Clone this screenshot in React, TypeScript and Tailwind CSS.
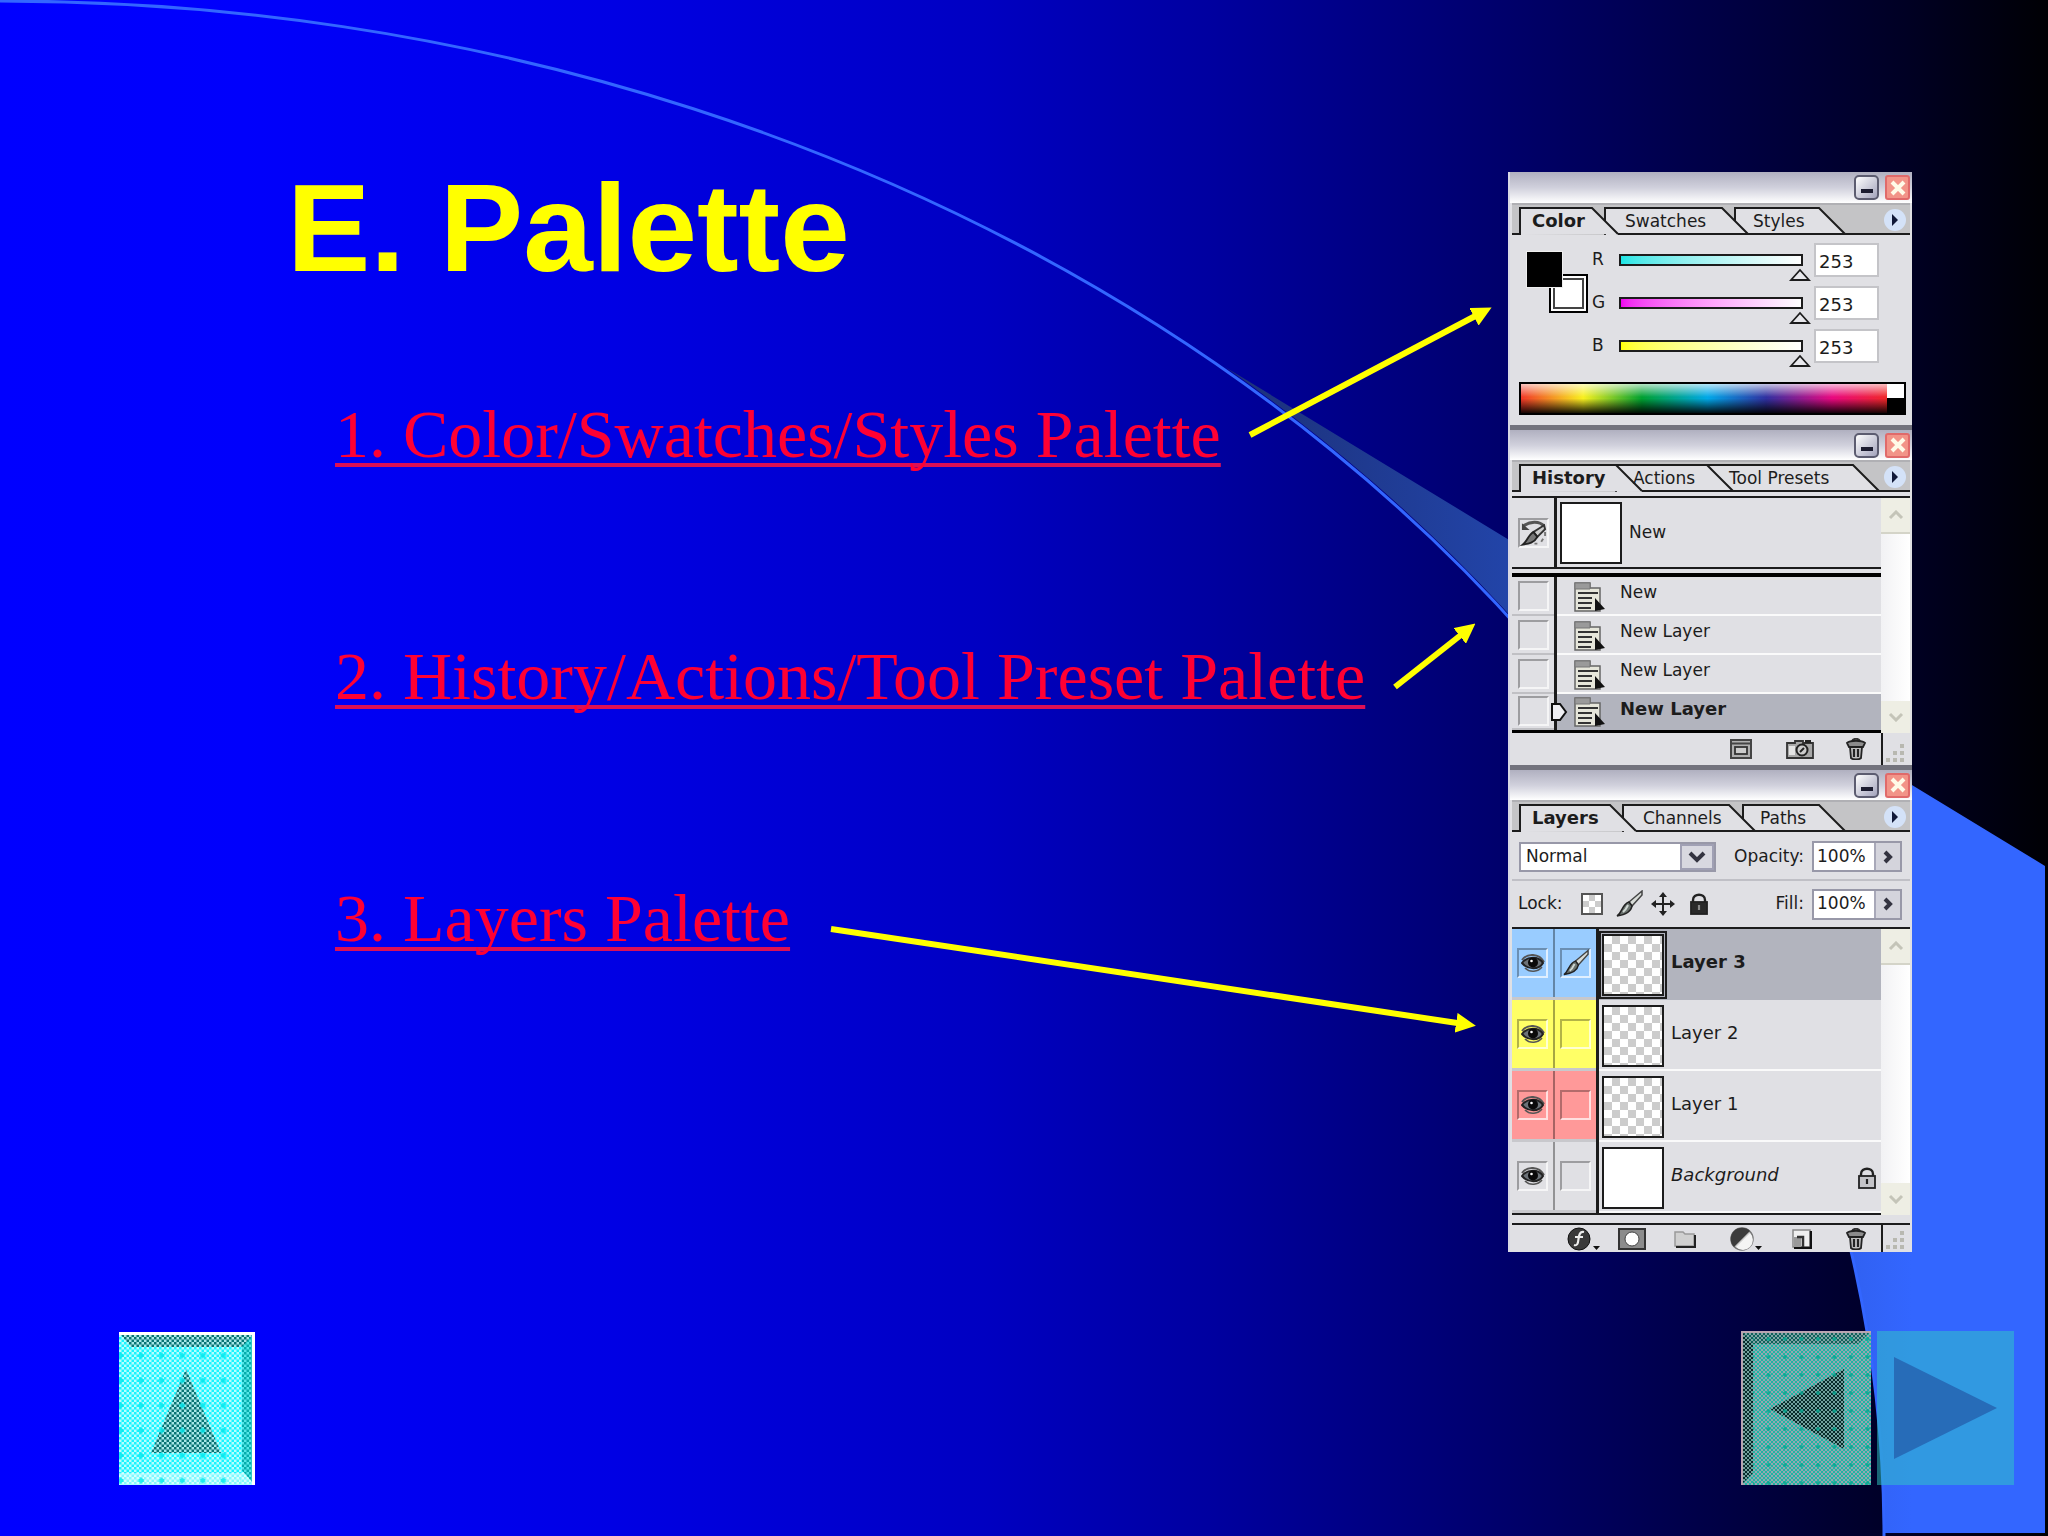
import React from "react";

type Tab = { label: string; start: number; end: number; width: string };

const links = [
  { href: "#color", text: "1. Color/Swatches/Styles Palette" },
  { href: "#history", text: "2. History/Actions/Tool Preset Palette" },
  { href: "#layers", text: "3. Layers Palette" },
];

const colorTabs: Tab[] = [
  { label: "Color", start: 8, end: 80, width: "w-[93px]" },
  { label: "Swatches", start: 93, end: 210, width: "w-[128px]" },
  { label: "Styles", start: 223, end: 307, width: "w-[80px]" },
];

const historyTabs: Tab[] = [
  { label: "History", start: 8, end: 104, width: "w-[101px]" },
  { label: "Actions", start: 104, end: 195, width: "w-[96px]" },
  { label: "Tool Presets", start: 195, end: 341, width: "w-[120px]" },
];

const layerTabs: Tab[] = [
  { label: "Layers", start: 8, end: 98, width: "w-[111px]" },
  { label: "Channels", start: 111, end: 217, width: "w-[117px]" },
  { label: "Paths", start: 231, end: 307, width: "w-[80px]" },
];

const channels = [
  { name: "R", track: "bg-linear-to-r from-[#19e6e6] to-white" },
  { name: "G", track: "bg-linear-to-r from-[#f000f0] to-white" },
  { name: "B", track: "bg-linear-to-r from-[#ffff00] to-white" },
];

const historyStates = [
  { label: "New", selected: false },
  { label: "New Layer", selected: false },
  { label: "New Layer", selected: false },
  { label: "New Layer", selected: true },
];

const layers = [
  { label: "Layer 3", tint: "bg-[#99ccff]", selected: true },
  { label: "Layer 2", tint: "bg-[#ffff66]", selected: false },
  { label: "Layer 1", tint: "bg-[#ff9999]", selected: false },
  { label: "Background", tint: "bg-[#e0e0e4]", selected: false },
];

/* Icons */

function BrushIcon() {
  return (
    <svg viewBox="0 0 28 28" className="h-7 w-7">
      <path d="M27 1 L14 12 L17 16 L27 5Z" fill="#d8dcd8" stroke="#444" strokeWidth="1.500" />
      <path d="M14 12 L17 16 C16 22 9 25 2 26 C7 23 7 14 14 12Z" fill="#6c7470" stroke="#222" strokeWidth="1.500" />
      <path d="M8 22 C11 20 12 17 13 15" stroke="#d0d8d4" strokeWidth="2" fill="none" />
    </svg>
  );
}

function EyeIcon() {
  return (
    <svg viewBox="0 0 24 20" className="h-5 w-6">
      <path d="M1 7 C6 0 18 0 23 9" fill="none" stroke="#555" strokeWidth="2" />
      <path d="M1 10 C6 3 18 3 22 10 C18 17 7 17 1 10Z" fill="#6c7278" stroke="#222" strokeWidth="2" />
      <circle cx="12" cy="9.500" r="5" fill="#0a0a0a" />
      <circle cx="10.500" cy="8" r="1.300" fill="#fff" />
      <path d="M4 15 C9 20 17 19 21 14" fill="none" stroke="#555" strokeWidth="1.600" />
    </svg>
  );
}

function StateIcon() {
  return (
    <svg viewBox="0 0 32 30" className="h-[30px] w-8">
      <path d="M1 29 V1 H16 V6 H26 V29Z" fill="#e6e6da" stroke="#666" strokeWidth="1.500" />
      <path d="M1 1 H16 V7 H1Z" fill="#9a9a9a" stroke="#777" />
      <path d="M4 11 H24 M4 16 H18 M4 21 H18 M4 26 H17" stroke="#333" strokeWidth="1.800" />
      <path d="M21 16 L31 27 L21 29Z" fill="#111" />
    </svg>
  );
}

function HistoryBrushIcon() {
  return (
    <svg viewBox="0 0 28 28" className="h-7 w-7">
      <path d="M3 7 C10 2 20 1 25 7" fill="none" stroke="#555" strokeWidth="3" />
      <path d="M2 4 V11 H10Z" fill="#444" />
      <path d="M25 6 L14 13 L18 18 L26 10Z" fill="#ccc" stroke="#333" strokeWidth="2" />
      <path d="M14 13 L18 18 C15 24 9 25 3 26 C8 22 9 15 14 13Z" fill="#777" stroke="#222" strokeWidth="2" />
      <path d="M26 13 V17 M24 20 L22 23 M18 25 H15" stroke="#777" strokeWidth="2" />
    </svg>
  );
}

function TrashIcon() {
  return (
    <svg viewBox="0 0 22 22" className="h-[22px] w-[22px]">
      <path d="M7 3 C8 0 14 0 15 3" fill="none" stroke="#333" strokeWidth="1.800" />
      <path d="M2 5 C5 2 17 2 20 5 L18 9 H4Z" fill="#8c8c8c" stroke="#222" strokeWidth="1.800" />
      <path d="M5 9 H17 L16 20 C14 22 8 22 6 20Z" fill="#c0c0c0" stroke="#222" strokeWidth="1.800" />
      <path d="M9 11 V19 M13 11 V19" stroke="#222" strokeWidth="2.200" />
    </svg>
  );
}

function NewDocumentIcon() {
  return (
    <svg viewBox="0 0 22 20" className="h-5 w-[22px]">
      <rect x="1" y="1" width="20" height="18" fill="#b0b0b0" stroke="#444" strokeWidth="2" />
      <path d="M2 4.500 H20" stroke="#444" strokeWidth="2" />
      <rect x="5" y="8" width="12" height="7" fill="#ccc" stroke="#333" strokeWidth="1.800" />
    </svg>
  );
}

function CameraIcon() {
  return (
    <svg viewBox="0 0 28 20" className="h-5 w-7">
      <path d="M1 4 H9 V2 H17 V4 H27 V19 H1Z" fill="#a8a8a8" stroke="#333" strokeWidth="1.800" />
      <rect x="3" y="7" width="6" height="9" fill="#e4e4e4" />
      <circle cx="16" cy="11" r="5.500" fill="#ccc" stroke="#222" strokeWidth="2" />
      <path d="M14 13 L18 9" stroke="#222" strokeWidth="2" />
      <path d="M19 1 H25 V4 H19Z" fill="#222" />
    </svg>
  );
}

function LockIcon({ solid }: { solid?: boolean }) {
  return (
    <svg viewBox="0 0 20 22" className="h-[22px] w-5">
      <path d="M4 10 V7 C4 0 16 0 16 7 V10" fill="none" stroke="#222" strokeWidth="2.400" />
      <rect x="2" y="9" width="16" height="12" fill={solid ? "#2a2a2a" : "#c4c4c8"} stroke="#222" strokeWidth="1.800" />
      <path d="M10 12 V17" stroke={solid ? "#888" : "#222"} strokeWidth="2.200" />
    </svg>
  );
}

function GripIcon() {
  return (
    <svg viewBox="0 0 24 24" className="h-6 w-6">
      <g fill="#b8b8b0">
        <rect x="17" y="3" width="4" height="4" />
        <rect x="10" y="10" width="4" height="4" />
        <rect x="17" y="10" width="4" height="4" />
        <rect x="3" y="17" width="4" height="4" />
        <rect x="10" y="17" width="4" height="4" />
        <rect x="17" y="17" width="4" height="4" />
      </g>
    </svg>
  );
}

/* Palette window parts */

function TitleBar({ first }: { first?: boolean }) {
  return (
    <div
      className={
        first
          ? "flex h-[31px] items-center justify-end gap-[6px] bg-linear-to-b from-[#b0b0c0] via-[#d0d0dc] to-white pr-[2px]"
          : "flex h-[35px] items-center justify-end gap-[6px] border-t-[5px] border-[#73737d] bg-linear-to-b from-[#b0b0c0] via-[#d0d0dc] to-white pr-[2px]"
      }
    >
      <button
        type="button"
        aria-label="Minimize"
        className="flex h-[25px] w-[25px] items-end justify-center rounded-[5px] border-2 border-[#5c5c70] bg-linear-to-br from-white to-[#a4a4bc] pb-[5px]"
      >
        <span className="h-1 w-3 bg-[#1c1c30]" />
      </button>
      <button
        type="button"
        aria-label="Close"
        className="flex h-[25px] w-[25px] items-center justify-center rounded-[3px] border-2 border-[#e06a6a] bg-[#f29488]"
      >
        <svg viewBox="0 0 16 16" className="h-4 w-4">
          <path d="M2 2 L14 14 M14 2 L2 14" stroke="#fffbe8" strokeWidth="4" />
        </svg>
      </button>
    </div>
  );
}

function TabStrip({ tabs }: { tabs: Tab[] }) {
  return (
    <div className="relative mx-[2px] flex h-8 items-center border-t-2 border-[#b0b0b4] bg-[#c4c4c6] pl-5">
      <svg viewBox="0 0 398 32" className="absolute -top-[2px] left-0 h-8 w-full" preserveAspectRatio="none">
        {[...tabs].reverse().map((tab) => (
          <path
            key={tab.label}
            d={`M${tab.start} 32 V5 H${tab.end} l26 26`}
            fill="#e0e0e4"
            stroke="#1c1c1c"
            strokeWidth="2"
          />
        ))}
        <path d={`M0 31 H8 M${tabs[0].end + 26} 31 H398`} stroke="#1c1c1c" strokeWidth="2" />
      </svg>
      {tabs.map((tab, index) => (
        <button
          key={tab.label}
          type="button"
          className={`relative h-7 shrink-0 pt-[2px] text-left whitespace-nowrap ${tab.width} ${
            index === 0 ? "text-[18px] leading-[26px] font-bold" : "text-[17px] leading-[26px]"
          }`}
        >
          {tab.label}
        </button>
      ))}
      <button
        type="button"
        aria-label="Palette menu"
        className="absolute top-1 right-1 flex h-[22px] w-[22px] items-center justify-center rounded-full bg-[#d4e2f8]"
      >
        <svg viewBox="0 0 8 12" className="h-3 w-2">
          <path d="M1 0 L7 6 L1 12Z" fill="#101838" />
        </svg>
      </button>
    </div>
  );
}

function ScrollBar() {
  return (
    <div className="flex w-[29px] shrink-0 flex-col justify-between bg-linear-to-r from-[#f2f2f4] to-white">
      <button type="button" aria-label="Scroll up" className="flex h-9 items-center justify-center border-b-2 border-[#d4d4c8] bg-[#eeeee4]">
        <svg viewBox="0 0 16 10" className="h-[10px] w-4">
          <path d="M2 8 L8 2 L14 8" fill="none" stroke="#c4c4b8" strokeWidth="3" />
        </svg>
      </button>
      <button type="button" aria-label="Scroll down" className="flex h-8 items-center justify-center bg-[#eeeee4]">
        <svg viewBox="0 0 16 10" className="h-[10px] w-4">
          <path d="M2 2 L8 8 L14 2" fill="none" stroke="#c4c4b8" strokeWidth="3" />
        </svg>
      </button>
    </div>
  );
}

function InsetBox({ children }: { children?: React.ReactNode }) {
  return (
    <span className="flex h-[30px] w-[31px] items-center justify-center border-2 border-t-black/30 border-r-white/70 border-b-white/70 border-l-black/30">
      {children}
    </span>
  );
}

function ColorPalette() {
  return (
    <section id="color" aria-label="Color palette">
      <TitleBar first />
      <TabStrip tabs={colorTabs} />
      <div className="flex h-[137px] pt-2 pl-4">
        <div className="relative mt-2 h-[62px] w-[62px] shrink-0">
          <button
            type="button"
            aria-label="Background color"
            className="absolute right-0 bottom-0 h-[39px] w-[39px] border-2 border-black bg-white outline-2 -outline-offset-[6px] outline-[#444]"
          />
          <button type="button" aria-label="Foreground color" className="absolute top-0 left-0 h-[37px] w-[37px] border border-[#eee] bg-black" />
        </div>
        <div className="flex flex-col gap-[9px] pl-1">
          {channels.map((channel) => (
            <div key={channel.name} className="flex h-[34px] items-center">
              <label htmlFor={`channel-${channel.name}`} className="w-[27px] text-[17px]">
                {channel.name}
              </label>
              <div className="relative flex h-3 w-[184px]">
                <input
                  id={`channel-${channel.name}`}
                  type="range"
                  min={0}
                  max={255}
                  defaultValue={253}
                  className={`h-3 w-full appearance-none border-2 border-[#1c1c1c] [&::-webkit-slider-thumb]:opacity-0 ${channel.track}`}
                />
                <svg viewBox="0 0 22 13" className="absolute top-[14px] -right-2 h-[13px] w-[22px]">
                  <path d="M2 12 L11 2 L20 12Z" fill="#e8e8ec" stroke="#1c1c1c" strokeWidth="1.800" />
                </svg>
              </div>
              <input
                type="text"
                aria-label={`${channel.name} value`}
                defaultValue="253"
                className="ml-[11px] h-[34px] w-[65px] border-2 border-[#c4c4c8] bg-white pt-[2px] pl-[3px] text-[18px]"
              />
            </div>
          ))}
        </div>
      </div>
      <div className="pt-[10px] pr-[6px] pb-[10px] pl-[9px]">
        <div className="flex h-[33px] border-2 border-black">
          <div className="flex-1 bg-[image:linear-gradient(to_bottom,rgba(255,255,255,0.7),transparent_45%,transparent_50%,rgba(0,0,0,0.9)),linear-gradient(to_right,#f03828,#f8f020_17%,#00a030_33%,#00a8e8_51%,#3030a0_67%,#e80880_85%,#f02828)]" />
          <div className="w-[17px] bg-linear-to-b from-white from-50% to-black to-50%" />
        </div>
      </div>
    </section>
  );
}

function HistoryPalette() {
  return (
    <section id="history" aria-label="History palette">
      <TitleBar />
      <TabStrip tabs={historyTabs} />
      <div className="mx-[2px] mt-1 flex border-t-2 border-[#1c1c1c]">
        <div className="flex-1">
          <div className="flex h-[71px] border-b-2 border-[#1c1c1c]">
            <div className="flex w-[42px] items-center justify-center">
              <InsetBox>
                <HistoryBrushIcon />
              </InsetBox>
            </div>
            <div className="flex flex-1 items-center gap-[7px] border-l-3 border-[#1c1c1c] pl-[3px]">
              <span className="h-[62px] w-[62px] border-2 border-[#1c1c1c] bg-white" />
              <span className="text-[17px]">New</span>
            </div>
          </div>
          <ul className="mt-1 border-t-4 border-b-3 border-black">
            {historyStates.map((state, index) => (
              <li key={index} className={state.selected ? "flex h-9" : "flex h-[39px]"}>
                <div className="flex w-[42px] items-center justify-center border-b-2 border-[#c0c0c4]">
                  <InsetBox />
                </div>
                <div
                  className={`relative flex flex-1 items-center gap-[14px] border-l-3 border-[#1c1c1c] pl-[17px] ${
                    state.selected ? "bg-[#b2b4be]" : "shadow-[inset_0_-2px_0_#fafafa]"
                  }`}
                >
                  {state.selected && (
                    <svg viewBox="0 0 18 20" className="absolute top-2 -left-[7px] h-5 w-[18px]">
                      <path d="M2 2 H10 L16 10 L10 18 H2Z" fill="#f0f0f4" stroke="#111" strokeWidth="2" />
                    </svg>
                  )}
                  <StateIcon />
                  <span className={state.selected ? "pb-[7px] text-[18px] font-bold" : "pb-[7px] text-[17px]"}>
                    {state.label}
                  </span>
                </div>
              </li>
            ))}
          </ul>
        </div>
        <ScrollBar />
      </div>
      <div className="mx-[2px] flex h-8 items-center justify-end">
        <button type="button" aria-label="New document from state" className="mr-[34px]">
          <NewDocumentIcon />
        </button>
        <button type="button" aria-label="New snapshot" className="mr-[31px]">
          <CameraIcon />
        </button>
        <button type="button" aria-label="Delete state" className="mr-[14px]">
          <TrashIcon />
        </button>
        <span className="flex h-full w-[29px] items-end border-l-2 border-[#1c1c1c]">
          <GripIcon />
        </span>
      </div>
    </section>
  );
}

function PercentField({ label }: { label: string }) {
  return (
    <label className="ml-auto flex items-center gap-2 text-[17px]">
      {label}
      <span className="flex h-[31px] w-[90px] border-2 border-[#9898a8] bg-white">
        <input type="text" defaultValue="100%" className="w-[60px] pl-[3px] text-[17px]" />
        <span className="flex flex-1 items-center justify-center border-l-2 border-[#a8a8b8] bg-[#d4d4dc]">
          <svg viewBox="0 0 10 14" className="h-[14px] w-[10px]">
            <path d="M2 2 L7 7 L2 12" fill="none" stroke="#333340" strokeWidth="4" />
          </svg>
        </span>
      </span>
    </label>
  );
}

function LayersPalette() {
  return (
    <section id="layers" aria-label="Layers palette">
      <TitleBar />
      <TabStrip tabs={layerTabs} />
      <div className="mx-[2px] flex h-[49px] items-center border-b-2 border-[#c0c0c6] pt-[2px] pr-[8px] pl-[7px]">
        <div className="relative w-[197px]">
          <select
            aria-label="Blending mode"
            className="h-[30px] w-full appearance-none border-2 border-[#9898a8] bg-white pl-[5px] text-[17px]"
          >
            <option>Normal</option>
          </select>
          <span className="pointer-events-none absolute top-[2px] right-[2px] flex h-[26px] w-[34px] items-center justify-center border-2 border-[#a0a0b4] bg-[#d8d8e0]">
            <svg viewBox="0 0 18 12" className="h-3 w-[18px]">
              <path d="M2 2 L9 9 L16 2" fill="none" stroke="#333340" strokeWidth="4" />
            </svg>
          </span>
        </div>
        <PercentField label="Opacity:" />
      </div>
      <div className="mx-[2px] flex h-12 items-center border-b-2 border-[#1c1c1c] pr-[8px] pl-[6px]">
        <span className="w-[63px] text-[17px]">Lock:</span>
        <button
          type="button"
          aria-label="Lock transparent pixels"
          className="mr-3 h-[22px] w-[22px] border-2 border-[#555] bg-[image:repeating-conic-gradient(#ccc_0_25%,#fff_0_50%)] bg-[length:12px_12px]"
        />
        <button type="button" aria-label="Lock image pixels" className="mr-2">
          <BrushIcon />
        </button>
        <button type="button" aria-label="Lock position" className="mr-[14px]">
          <svg viewBox="0 0 24 24" className="h-6 w-6">
            <path d="M12 3 V21 M3 12 H21" stroke="#222" strokeWidth="2" />
            <path d="M12 0 L16 5 H8Z M12 24 L16 19 H8Z M0 12 L5 8 V16Z M24 12 L19 8 V16Z" fill="#222" />
          </svg>
        </button>
        <button type="button" aria-label="Lock all">
          <LockIcon solid />
        </button>
        <PercentField label="Fill:" />
      </div>
      <div className="mx-[2px] flex">
        <ul className="flex-1 border-b-2 border-[#1c1c1c]">
          {layers.map((layer) => (
            <li key={layer.label} className="flex h-[71px]">
              <div className={`flex w-[84px] border-b-3 border-[#c8c8cc] ${layer.tint}`}>
                <button
                  type="button"
                  aria-label={`Toggle ${layer.label}`}
                  className="flex w-[43px] items-center justify-center border-r-2 border-black/35"
                >
                  <InsetBox>
                    <EyeIcon />
                  </InsetBox>
                </button>
                <span className="flex flex-1 items-center justify-center">
                  <InsetBox>{layer.selected && <BrushIcon />}</InsetBox>
                </span>
              </div>
              <div
                className={`flex flex-1 items-center border-l-3 border-[#1c1c1c] pr-1 pl-[3px] ${
                  layer.selected ? "bg-[#b2b4be]" : "shadow-[inset_0_-2px_0_#fafafa]"
                }`}
              >
                {/* the active layer gets a second frame round its thumbnail */}
                <span
                  className={`block h-[62px] w-[62px] border-2 border-[#1c1c1c] ${
                    layer.selected ? "outline-2 outline-offset-1 outline-[#1c1c1c]" : ""
                  } ${
                    layer.label === "Background"
                      ? "bg-white"
                      : "bg-[image:repeating-conic-gradient(#ccc_0_25%,#fff_0_50%)] bg-[length:16px_16px]"
                  }`}
                />
                <span
                  className={`ml-[7px] flex-1 pb-[6px] text-[18px] ${layer.selected ? "font-bold" : ""} ${
                    layer.label === "Background" ? "italic" : ""
                  }`}
                >
                  {layer.label}
                </span>
                {layer.label === "Background" && <LockIcon />}
              </div>
            </li>
          ))}
        </ul>
        <ScrollBar />
      </div>
      <div className="mx-[2px] mt-2 flex h-[29px] items-center justify-end border-t-2 border-[#1c1c1c]">
        <button type="button" aria-label="Layer style" className="mr-[17px]">
          <svg viewBox="0 0 34 24" className="h-6 w-[34px]">
            <circle cx="12" cy="12" r="11" fill="#3a3a3a" stroke="#111" />
            <path d="M17 5 C13 4 12 8 11.500 12 C11 17 10 19 7 18 M8 10 H16" fill="none" stroke="#eee" strokeWidth="2.200" />
            <path d="M26 19 H33 L29.500 23Z" fill="#111" />
          </svg>
        </button>
        <button type="button" aria-label="Add mask" className="mr-[28px]">
          <svg viewBox="0 0 28 22" className="h-[22px] w-7">
            <rect x="1" y="1" width="26" height="20" fill="#8c8c8c" stroke="#333" strokeWidth="2" />
            <circle cx="14" cy="11" r="7" fill="#fff" stroke="#444" />
          </svg>
        </button>
        <button type="button" aria-label="New set" className="mr-[34px]">
          <svg viewBox="0 0 22 18" className="h-[18px] w-[22px]">
            <path d="M1 2 H9 L11 4 H20 V16 H1Z" fill="#d0d0d0" stroke="#999" strokeWidth="1.500" />
            <path d="M2 17 H21 V5" fill="none" stroke="#222" strokeWidth="2" />
          </svg>
        </button>
        <button type="button" aria-label="New adjustment layer" className="mr-[30px]">
          <svg viewBox="0 0 32 24" className="h-6 w-8">
            <circle cx="12" cy="12" r="11" fill="#c8c8c8" stroke="#777" strokeWidth="1.500" />
            <path d="M4 20 A11 11 0 0 1 20 4Z" fill="#3c3c3c" />
            <path d="M6 20 L20 6 A9 9 0 0 1 6 20Z" fill="#f4f4f4" />
            <path d="M25 19 H32 L28.500 23Z" fill="#111" />
          </svg>
        </button>
        <button type="button" aria-label="New layer" className="mr-[33px]">
          <svg viewBox="0 0 20 20" className="h-5 w-5">
            <rect x="1" y="1" width="17" height="17" fill="#f0f0f0" stroke="#888" strokeWidth="1.500" />
            <path d="M2 19 H19 V2" fill="none" stroke="#111" strokeWidth="2.500" />
            <path d="M2 8 H9 V18 H2Z" fill="#999" />
            <path d="M5 8 H11 V18" fill="none" stroke="#333" strokeWidth="2.500" />
          </svg>
        </button>
        <button type="button" aria-label="Delete layer" className="mr-[14px]">
          <TrashIcon />
        </button>
        <span className="flex h-full w-[29px] items-end border-l-2 border-[#1c1c1c]">
          <GripIcon />
        </span>
      </div>
    </section>
  );
}

/* Slide artwork */

function Backdrop() {
  return (
    <svg viewBox="0 0 2048 1536" preserveAspectRatio="none" className="absolute inset-0 h-full w-full">
      <defs>
        <linearGradient id="sweep" gradientUnits="userSpaceOnUse" x1="1225" y1="0" x2="1912" y2="0">
          <stop offset="0" stopColor="#1c3078" />
          <stop offset="0.41" stopColor="#2244a8" />
          <stop offset="1" stopColor="#3366ff" />
        </linearGradient>
      </defs>
      <path d="M1225 367 L2045 866 V1533 H1884 A1884 1536 0 0 0 1225 367Z" fill="url(#sweep)" />
      <path d="M0 1 A1884 1536 0 0 1 1884 1536" fill="none" stroke="#3366ff" strokeWidth="3" />
    </svg>
  );
}

function Arrows() {
  return (
    <svg viewBox="0 0 2048 1536" preserveAspectRatio="none" className="pointer-events-none absolute inset-0 h-full w-full">
      <defs>
        <marker id="head" markerUnits="userSpaceOnUse" markerWidth="20" markerHeight="20" refX="8" refY="10" orient="auto">
          <path d="M0 0 L20 10 L0 20Z" fill="#ffff00" />
        </marker>
      </defs>
      <g stroke="#ffff00" strokeWidth="6">
        <path d="M1250 435 L1481 313" markerEnd="url(#head)" />
        <path d="M1395 687 L1466 631" markerEnd="url(#head)" />
        <path d="M831 929 L1464 1024" markerEnd="url(#head)" />
      </g>
    </svg>
  );
}

function UpButton() {
  return (
    <button type="button" aria-label="Up" className="h-[153px] w-[136px]">
      <svg viewBox="0 0 136 153" className="h-full w-full">
        <defs>
          <pattern id="upBase" width="5" height="5" patternUnits="userSpaceOnUse">
            <rect width="5" height="5" fill="#b4ffff" />
            <path d="M0 0H2.500V2.500H0Z M2.500 2.500H5V5H2.500Z" fill="#18f4ff" />
          </pattern>
          <pattern id="upDark" width="5" height="5" patternUnits="userSpaceOnUse">
            <rect width="5" height="5" fill="#a8e8e8" />
            <path d="M0 0H2.500V2.500H0Z M2.500 2.500H5V5H2.500Z" fill="#087474" />
          </pattern>
          <pattern id="upDots" x="12" y="11" width="20.500" height="25" patternUnits="userSpaceOnUse">
            <path d="M7.500 11H13V14H7.500Z M9 9.500H11.500V15.500H9Z" fill="#00e8ec" />
          </pattern>
        </defs>
        <rect width="136" height="153" fill="url(#upBase)" />
        <rect y="141" width="136" height="12" fill="#fff" opacity="0.45" />
        <path d="M2 3 H134 L123 15 H12Z" fill="url(#upDark)" />
        <path d="M134 3 V151 L123 138 V15Z" fill="url(#upDark)" />
        <path d="M134 3 V151 L123 138 V15Z" fill="#00e4e4" opacity="0.5" />
        <path d="M67 37 L102 121 H32Z" fill="url(#upDark)" />
        <rect width="122" height="153" fill="url(#upDots)" opacity="0.8" />
        <path d="M0 1.500 H134.500 V153" fill="none" stroke="#fff" strokeWidth="3" />
      </svg>
    </button>
  );
}

function PreviousButton() {
  return (
    <button type="button" aria-label="Previous" className="h-[154px] w-[130px]">
      <svg viewBox="0 0 130 154" className="h-full w-full">
        <defs>
          <pattern id="prevBase" width="4" height="4" patternUnits="userSpaceOnUse">
            <rect width="4" height="4" fill="#94a8b0" />
            <path d="M0 0H2V2H0Z M2 2H4V4H2Z" fill="#20b4a4" />
          </pattern>
          <pattern id="prevDark" width="4" height="4" patternUnits="userSpaceOnUse">
            <rect width="4" height="4" fill="#72a09c" />
            <path d="M0 0H2V2H0Z M2 2H4V4H2Z" fill="#062a2a" />
          </pattern>
          <pattern id="prevDots" x="3" y="0" width="16.500" height="18" patternUnits="userSpaceOnUse">
            <path d="M6 7H10V9H6Z M7 6H9V10H7Z" fill="#00a890" />
          </pattern>
        </defs>
        <rect width="130" height="154" fill="url(#prevBase)" />
        <path d="M2 2 H128 L117 13 H12Z" fill="url(#prevDark)" opacity="0.6" />
        <path d="M2 2 L12 13 V142 L2 152Z" fill="url(#prevDark)" />
        <path d="M29 78 L103 38 V118Z" fill="url(#prevDark)" />
        <rect x="12" width="118" height="154" fill="url(#prevDots)" opacity="0.8" />
        <path d="M1 154 V1 H130" fill="none" stroke="#b8a4b0" strokeWidth="2" />
      </svg>
    </button>
  );
}

function NextButton() {
  return (
    <button type="button" aria-label="Next" className="h-[154px] w-[137px] bg-[#2fccc4]/50">
      <svg viewBox="0 0 137 154" className="h-full w-full">
        <path d="M17 26 L120 77 L17 128Z" fill="#276cb8" />
      </svg>
    </button>
  );
}

export default function App() {
  return (
    <main className="relative flex min-h-screen flex-col bg-[linear-gradient(to_right,#0000ff_0%,#0000fc_12%,#0000e4_30%,#0000c2_48%,#0000a0_59%,#000074_71%,#000048_83%,#000024_93%,#000004_100%)]">
      <Backdrop />

      <div className="relative flex justify-between pr-[136px]">
        {/* Title and links */}
        <div className="pt-[158px] pl-[287px]">
          <h1 className="font-['Liberation_Sans',sans-serif] text-[125px] leading-[140px] font-bold whitespace-nowrap text-[#ffff00]">
            E. Palette
          </h1>
          <ul className="mt-[98px] flex flex-col gap-[166px] pl-[48px]">
            {links.map((link) => (
              <li key={link.href} className="h-[76px]">
                <a
                  href={link.href}
                  className="font-['Liberation_Serif',serif] text-[68px] leading-[76px] whitespace-nowrap text-[#ff0033] underline decoration-[#dd0f55] decoration-4 underline-offset-[6px] [text-decoration-skip-ink:none]"
                >
                  {link.text}
                </a>
              </li>
            ))}
          </ul>
        </div>

        {/* Palette windows */}
        <aside className="mt-[172px] w-[404px] shrink-0 self-start border-l-2 border-[#d8d8e4] bg-[#e0e0e4] font-['DejaVu_Sans',sans-serif] text-[#1c1c1c]">
          <ColorPalette />
          <HistoryPalette />
          <LayersPalette />
        </aside>
      </div>

      {/* Slide navigation */}
      <nav className="relative mt-auto flex items-end pr-[34px] pb-[51px] pl-[119px]">
        <UpButton />
        <div className="ml-auto flex gap-[6px]">
          <PreviousButton />
          <NextButton />
        </div>
      </nav>

      <Arrows />
    </main>
  );
}
